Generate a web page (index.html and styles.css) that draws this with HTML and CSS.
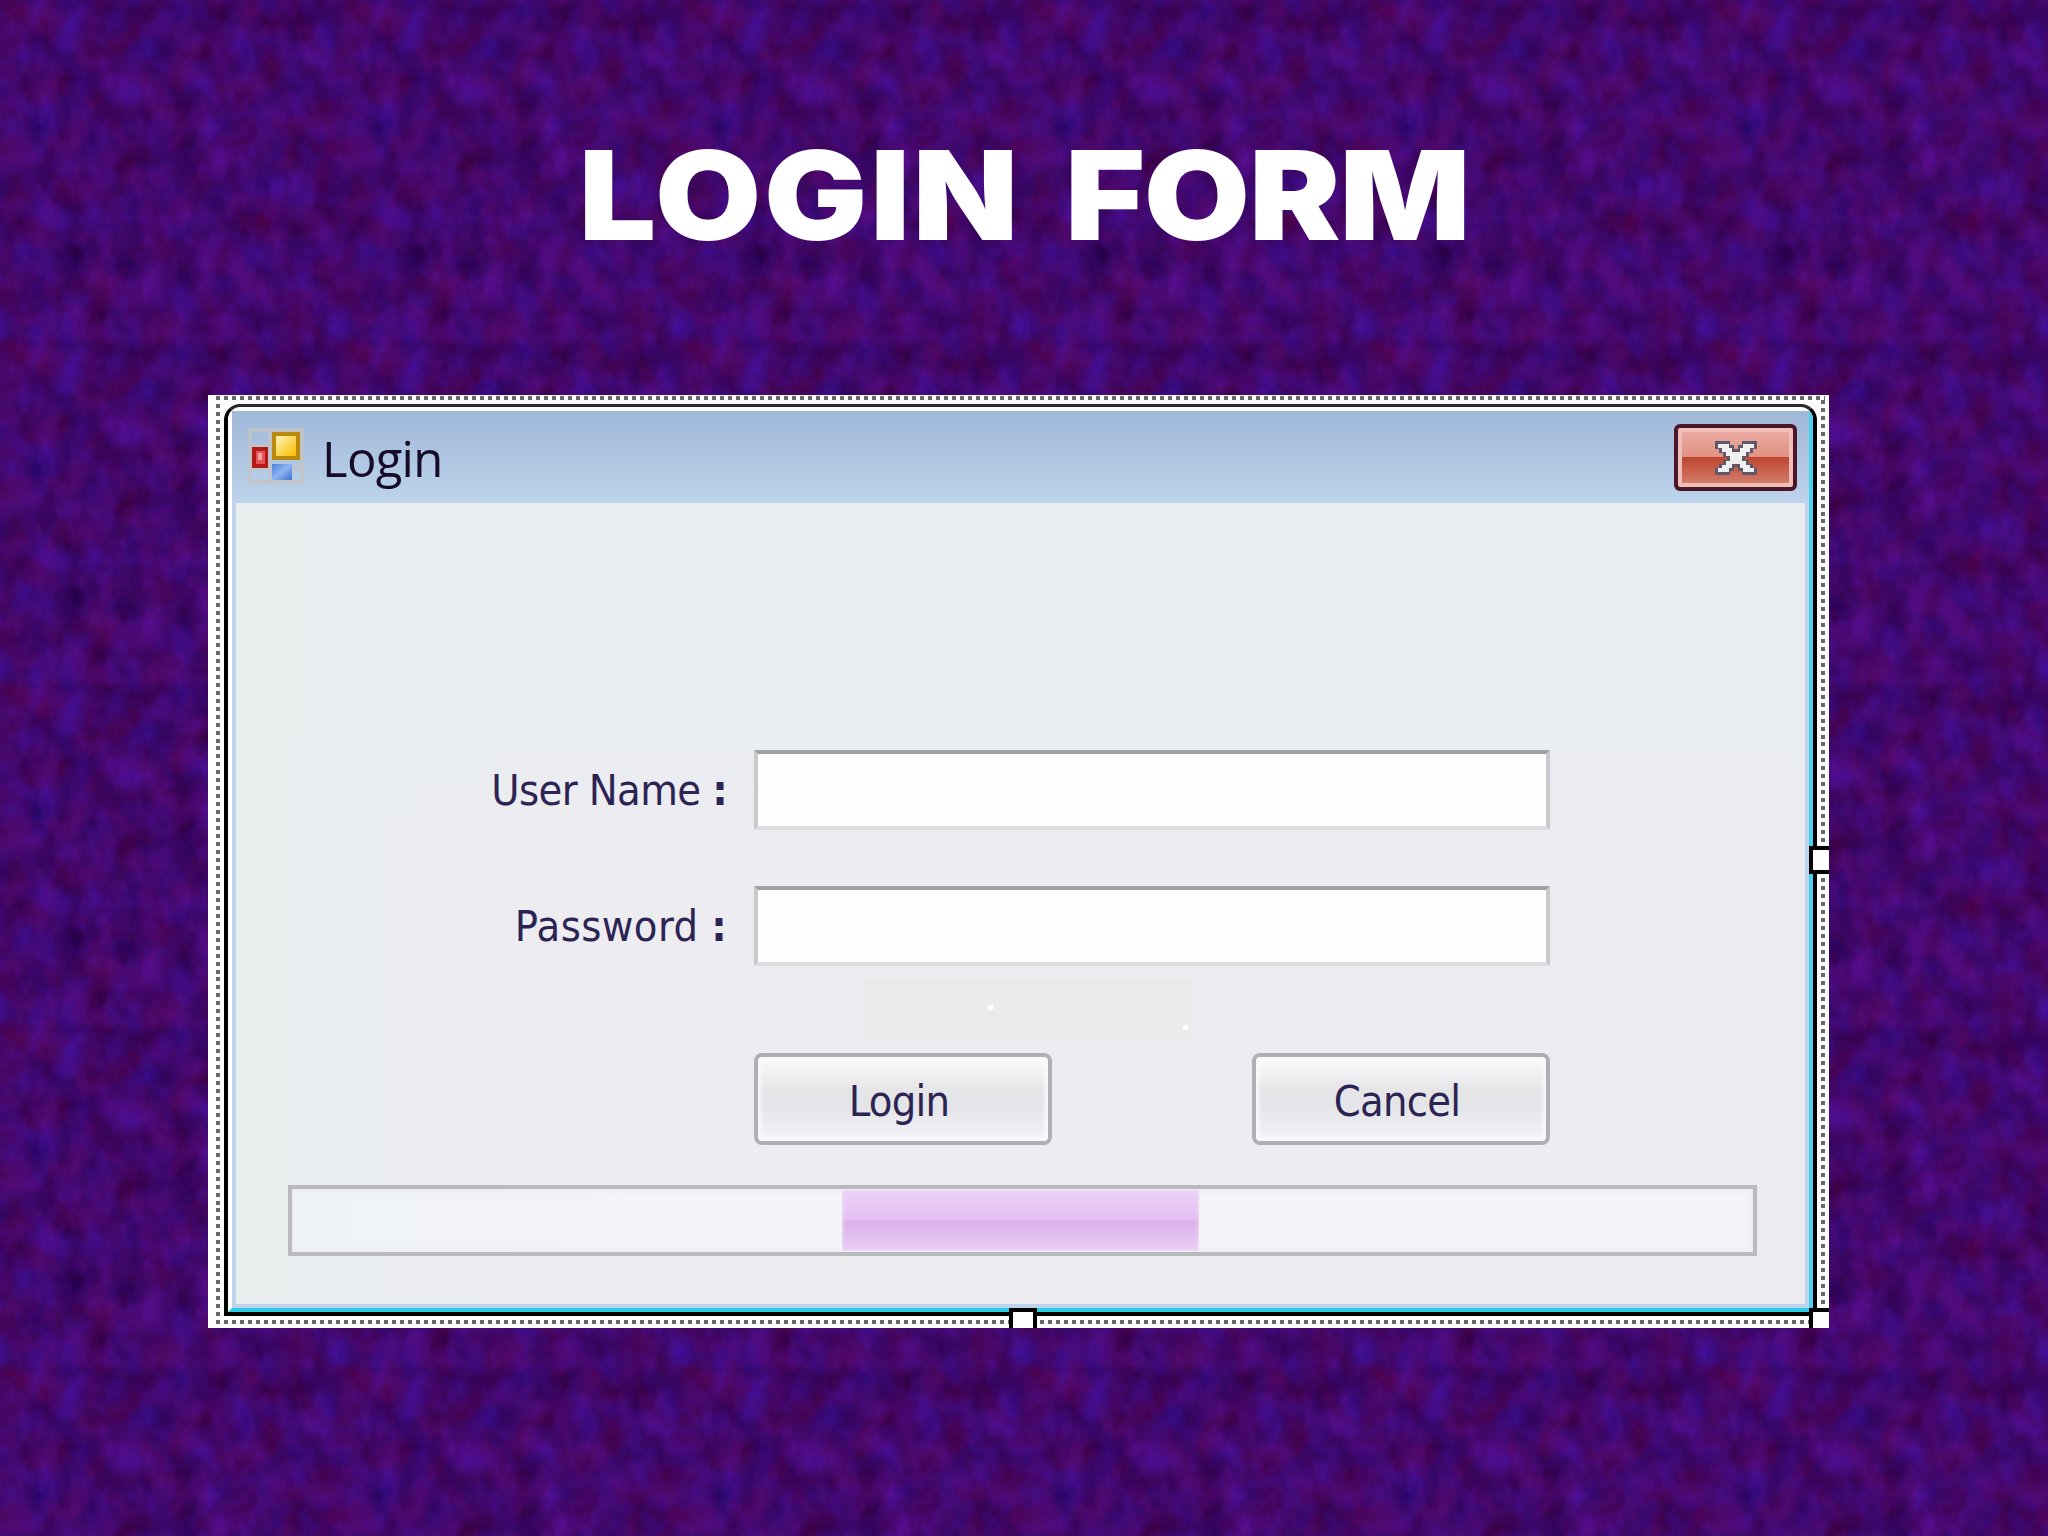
FILE: index.html
```html
<!DOCTYPE html>
<html lang="en">
<head>
    <meta charset="UTF-8">
    <meta name="viewport" content="width=device-width, initial-scale=1.0">
    <title>Login Form</title>
    <link rel="stylesheet" href="styles.css">
</head>
<body>
    <!-- woven purple cloth behind the slide -->
    <svg class="texture" width="2048" height="1536">
        <defs>
            <filter id="cloth" x="0" y="0" width="100%" height="100%" color-interpolation-filters="sRGB">
                <feTurbulence type="fractalNoise" baseFrequency="0.035 0.03" numOctaves="5" seed="8" stitchTiles="stitch"/>
                <feColorMatrix values="0.17 0.12 0 0 0.115  0 0.06 0.04 0 -0.02  0 0.26 0.28 0 0.155  0 0 0 0 1"/>
            </filter>
            <pattern id="tile" width="342" height="342" patternUnits="userSpaceOnUse">
                <rect width="342" height="342" filter="url(#cloth)"/>
            </pattern>
        </defs>
        <rect width="2048" height="1536" fill="url(#tile)"/>
    </svg>

    <h1><span>LOGIN</span> FORM</h1>

    <div class="designer">
        <div class="window">
            <div class="frame">
                <div class="titlebar">
                    <svg class="app-icon" width="56" height="56" viewBox="0 0 56 56">
                        <defs>
                            <linearGradient id="gold" x1="0" y1="0" x2="1" y2="1"><stop offset="0" stop-color="#fff0b8"/><stop offset="1" stop-color="#f8c000"/></linearGradient>
                            <linearGradient id="blue" x1="0" y1="0" x2="1" y2="1"><stop offset="0" stop-color="#4c80d8"/><stop offset=".5" stop-color="#8cb4f4"/><stop offset="1" stop-color="#3c70cc"/></linearGradient>
                        </defs>
                        <path d="M2 2H54V54H2ZM22 2V54M2 18H22M2 40H54M40 34V54" fill="none" stroke="#c4c4c4" stroke-width="3"/>
                        <rect x="24" y="4" width="28" height="28" fill="#b98a0c"/>
                        <rect x="28" y="8" width="20" height="20" fill="url(#gold)"/>
                        <rect x="4" y="19" width="16" height="21" fill="#b51a18"/>
                        <rect x="8" y="23" width="9" height="13" fill="#e0545a"/>
                        <rect x="10" y="25" width="4" height="7" fill="#f5a0a0"/>
                        <rect x="24" y="36" width="20" height="16" fill="url(#blue)"/>
                    </svg>
                    <span class="caption">Login</span>
                    <div class="close">
                        <svg width="44" height="36" viewBox="0 0 44 36" shape-rendering="crispEdges">
                            <path d="M1 1H16V5H20V9H24V5H28V1H43V9H39V13H35V17H31V20H35V24H39V28H43V35H28V31H24V27H20V31H16V35H1V28H5V24H9V20H13V17H9V13H5V9H1Z" fill="#5d5968"/>
                            <path d="M4 4H15V8H18V12H26V8H29V4H40V8H36V12H32V16H28V21H32V25H36V28H40V32H29V28H26V24H18V28H15V32H4V28H8V25H12V21H16V16H12V12H8V8H4Z" fill="#f1f0f0"/>
                        </svg>
                    </div>
                </div>

                <div class="client">
                    <form>
                        <label for="user">User Name <b>:</b></label>
                        <input type="text" id="user">
                        <label for="pass" class="pass-label">Password <b>:</b></label>
                        <input type="password" id="pass">
                        <div class="buttons">
                            <button type="button">Login</button>
                            <button type="button">Cancel</button>
                        </div>
                    </form>
                    <div class="progress"><div class="block"></div></div>
                    <div class="smudge"></div>
                </div>
            </div>
        </div>
        <i class="handle right"></i>
        <i class="handle bottom"></i>
        <i class="handle corner"></i>
    </div>
</body>
</html>
```
FILE: styles.css
```css
*{
    margin: 0;
    padding: 0;
    box-sizing: border-box;
}
body{
    width: 2048px;
    height: 1536px;
    overflow: hidden;
    background: #43086b;
    display: flex;
    flex-direction: column;
}
.texture{
    position: absolute;
    top: 0;
    left: 0;
    z-index: -1;
}
h1{
    align-self: center;
    height: 395px;
    padding-top: 120px;
    color: white;
    font: 900 124px/150px Inter, "Liberation Sans", sans-serif;
    letter-spacing: -1px;
    word-spacing: 16px;
    transform: scaleX(1.105);
}
h1 span{
    letter-spacing: 2.5px;
}
/* selection border of the form designer, 4px dots */
.designer{
    position: relative;
    width: 1621px;
    height: 933px;
    margin-left: 208px;
    padding: 9px 12px 12px 16px;
    background:
        linear-gradient(90deg, #686868 4px, transparent 4px) 0 1px / 8px 4px repeat-x,
        linear-gradient(90deg, #686868 4px, transparent 4px) 0 925px / 8px 4px repeat-x,
        repeating-linear-gradient(#686868 0 4px, transparent 4px 7.965px) 8px 9px / 4px 920px no-repeat,
        repeating-linear-gradient(#686868 0 4px, transparent 4px 7.965px) 1613px 5px / 4px 905px no-repeat,
        #fefdfe;
    box-shadow: inset 8px 0 #fefdfe, inset -4px 0 #fefdfe;
}
.window{
    height: 912px;
    border: 4px solid #000;
    border-top: 3px solid #2b2b2b;
    border-radius: 16px 16px 0 0;
    background: white;
    padding-top: 4px;
    overflow: hidden;
}
.frame{
    height: 901px;
    border: solid #fff;
    border-width: 0 4px 4px;
    border-right-color: #48d0ee;
    border-bottom-color: #2dcce6;
}
.titlebar{
    height: 92px;
    padding: 13px 12px 0 16px;
    display: flex;
    align-items: flex-start;
    background: linear-gradient(#9fb8d8, #bed4ec);
}
.app-icon{
    margin-top: 4px;
}
.caption{
    margin-left: 18px;
    color: #160c28;
    font: 49px/68px "Open Sans", "Noto Sans", sans-serif;
    letter-spacing: -0.7px;
}
.close{
    width: 123px;
    height: 67px;
    margin-left: auto;
    border: 4px solid #4b1629;
    border-radius: 6px;
    background: linear-gradient(#e9ada6, #e29283 49%, #bd4630 50%, #d88372);
    box-shadow: inset 0 0 0 4px #efc0ba;
    display: flex;
    align-items: center;
    justify-content: center;
}
.client{
    position: relative;
    height: 805px;
    border: solid #bfd3ee;
    border-width: 0 4px 4px;
    padding: 247px 48px 0 52px;
    background: linear-gradient(90deg, #e9eeef, rgba(233, 237, 241, 0) 22%), linear-gradient(#e9edf1 27%, #edecf1 40%);
}
form{
    display: grid;
    grid-template-columns: 439px 796px;
    grid-template-rows: 80px 80px 92px;
    column-gap: 27px;
    row-gap: 56px;
    align-items: start;
}
label,button{
    color: #2c2452;
    font: 43px/80px "DejaVu Sans Condensed", "DejaVu Sans", sans-serif;
}
label{
    text-align: right;
    letter-spacing: -0.6px;
}
.pass-label{
    letter-spacing: 0.4px;
}
input{
    width: 796px;
    height: 80px;
    border: 4px solid #c8cacd;
    border-top-color: #a0a2a5;
    border-bottom-color: #dcdde1;
    background: #fdfefe;
    font-size: 40px;
}
.buttons{
    grid-column: 2;
    display: flex;
    justify-content: space-between;
    margin-top: 31px;
}
button{
    width: 298px;
    height: 92px;
    padding: 3px 8px 0 0;
    border: 4px solid #b0b0b4;
    border-radius: 8px;
    background: linear-gradient(#fbfbfd, #e5e5e8 40%, #e4e5e8 60%, #f4f4f8);
    box-shadow: inset 0 0 4px 3px #fafafd;
    letter-spacing: -0.8px;
}
.progress{
    width: 1469px;
    height: 71px;
    margin-top: 71px;
    padding: 1px 0 1px 550px;
    border: 4px solid #b9b9be;
    background: linear-gradient(90deg, #eff3f8, #f4f3f9 30%);
    box-shadow: inset 0 0 4px 3px #ededf1;
}
.block{
    width: 357px;
    height: 61px;
    background: linear-gradient(#edd2f8, #e4bef2 49%, #dbb1e9 51%, #e9cdf5);
    box-shadow: inset 0 0 3px 1px #f0dcf8;
}
/* faint patch left above the buttons */
.smudge{
    position: absolute;
    left: 628px;
    top: 476px;
    width: 330px;
    height: 64px;
    background:
        linear-gradient(#fff, #fff) 124px 26px / 5px 5px no-repeat,
        linear-gradient(#fff, #fff) 319px 46px / 5px 5px no-repeat,
        #ebebed;
}
.handle{
    position: absolute;
    background: #fff;
    border: 4px solid #000;
}
.right{
    left: 1601px;
    top: 451px;
    width: 20px;
    height: 28px;
    border-right: 0;
}
.bottom{
    left: 801px;
    top: 913px;
    width: 28px;
    height: 20px;
    border-bottom: 0;
}
.corner{
    left: 1601px;
    top: 913px;
    width: 20px;
    height: 20px;
    border-width: 4px 0 0 4px;
}
```
